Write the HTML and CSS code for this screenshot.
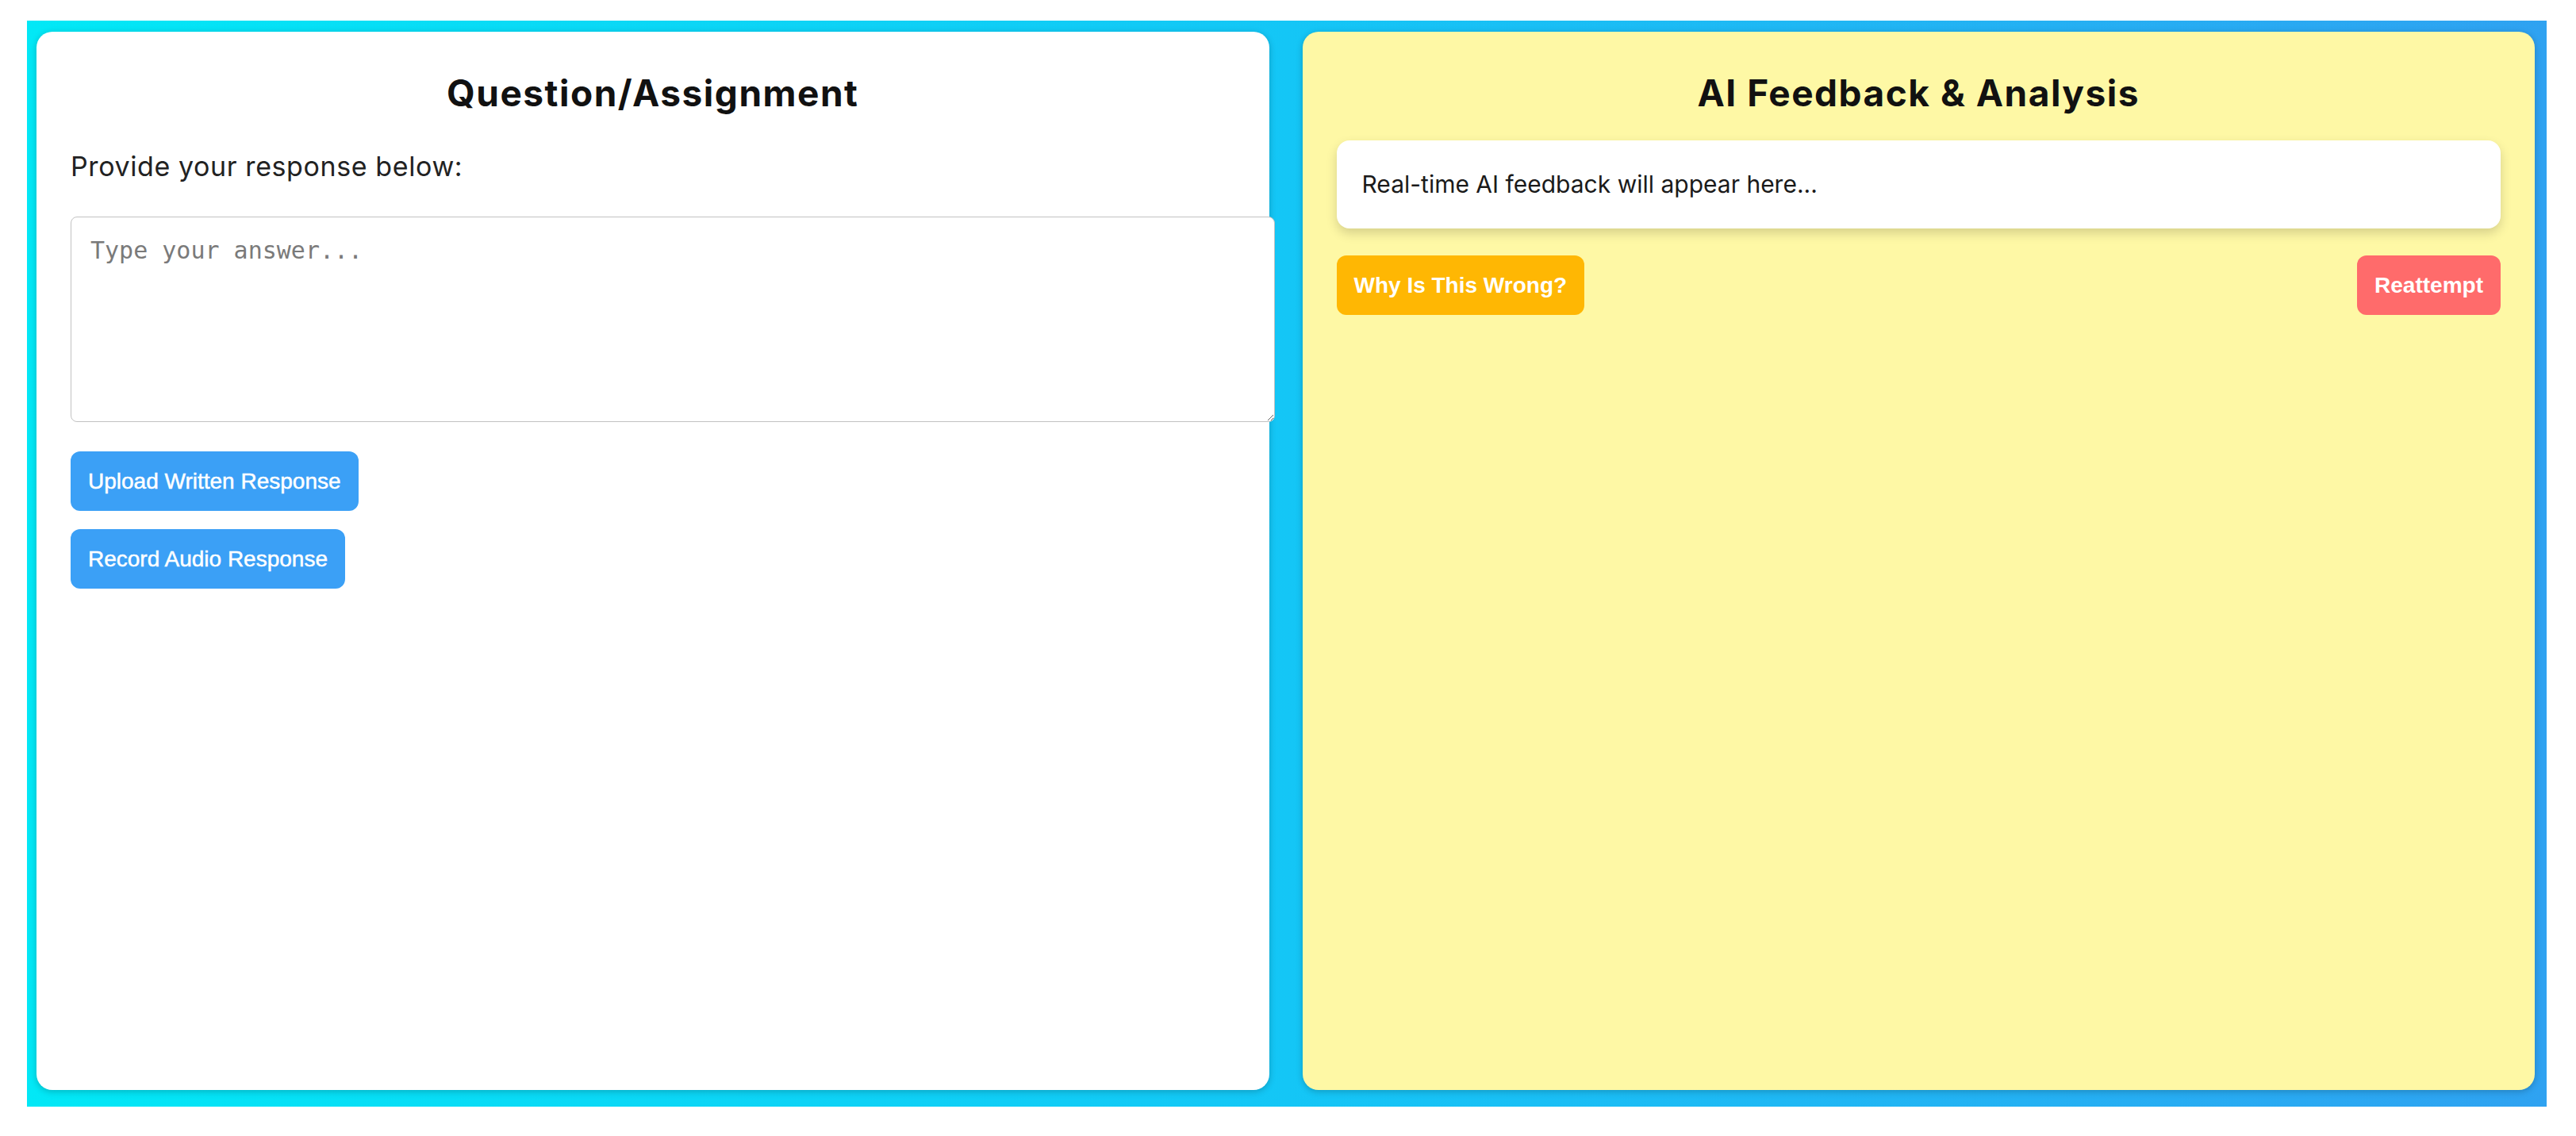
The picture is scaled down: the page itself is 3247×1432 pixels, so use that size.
FILE: index.html
```
<!DOCTYPE html>
<html lang="en">
<head>
  <meta charset="UTF-8">
  <meta name="viewport" content="width=device-width, initial-scale=1.0">
  <title>Assignment Workspace</title>
  <link rel="stylesheet" href="styles.css">
</head>
<body>
  <div class="app">
    <div class="panel left-panel">
      <h2>Question/Assignment</h2>
      <p class="prompt">Provide your response below:</p>
      <textarea id="answer" placeholder="Type your answer..."></textarea>
      <button class="btn btn-blue">Upload Written Response</button>
      <button class="btn btn-blue">Record Audio Response</button>
    </div>

    <div class="panel right-panel">
      <h2>AI Feedback &amp; Analysis</h2>
      <div class="feedback" id="feedback">Real-time AI feedback will appear here...</div>
      <div class="actions">
        <button class="btn btn-orange">Why Is This Wrong?</button>
        <button class="btn btn-red">Reattempt</button>
      </div>
    </div>
  </div>
</body>
</html>
```

FILE: styles.css
```
html, body {
  height: 100%;
}
body {
  margin: 0;
  padding: 26px 37px 37px 34px;
  box-sizing: border-box;
  background: #ffffff;
  font-family: Inter, "Noto Sans", sans-serif;
  color: #1a1a1a;
}
.app {
  display: flex;
  gap: 42px;
  height: 100%;
  box-sizing: border-box;
  padding: 14px 15px 21px 12px;
  background: linear-gradient(to right, #02e8f6, #14c6f6 50%, #2fa2f1);
}
.panel {
  flex: 1;
  min-width: 0;
  padding: 50px 43px 0 43px;
  border-radius: 20px;
  box-shadow: 0 2px 8px rgba(0, 0, 0, 0.22);
}
.left-panel {
  background: #ffffff;
}
.right-panel {
  background: #fef8a5;
}
h2 {
  margin: 0;
  text-align: center;
  font-size: 46px;
  line-height: 54px;
  font-weight: 700;
  letter-spacing: 1.5px;
  color: #111;
}
.prompt {
  margin: 46px 0 43px 0;
  font-size: 34px;
  line-height: 40px;
  letter-spacing: 0.6px;
  color: #222;
}
textarea {
  display: block;
  width: 100%;
  height: 209px;
  padding: 24px;
  margin: 0 0 37px 0;
  border: 1px solid #c2c2c2;
  border-radius: 8px;
  font-family: "DejaVu Sans Mono", monospace;
  font-size: 30px;
  color: #222;
}
textarea::placeholder {
  color: #7a7a7a;
}
.btn {
  display: block;
  padding: 21px 22px;
  border: none;
  border-radius: 12px;
  font-family: "Liberation Sans", Arial, sans-serif;
  font-size: 28px;
  line-height: 33px;
  color: #fff;
  cursor: pointer;
}
.btn-blue {
  background: #3ba0f6;
  margin-bottom: 23px;
  -webkit-text-stroke: 0.5px #fff;
}
.btn-orange {
  background: #ffb703;
  font-weight: 700;
}
.btn-red {
  background: #ff6b6b;
  font-weight: 700;
}
.feedback {
  margin-top: 33px;
  padding: 37px 30px 38px 32px;
  background: #fff;
  border-radius: 16px;
  box-shadow: 0 6px 14px rgba(0, 0, 0, 0.16);
  font-size: 30px;
  line-height: 36px;
  color: #1a1a1a;
}
.actions {
  display: flex;
  justify-content: space-between;
  margin-top: 34px;
}
```
